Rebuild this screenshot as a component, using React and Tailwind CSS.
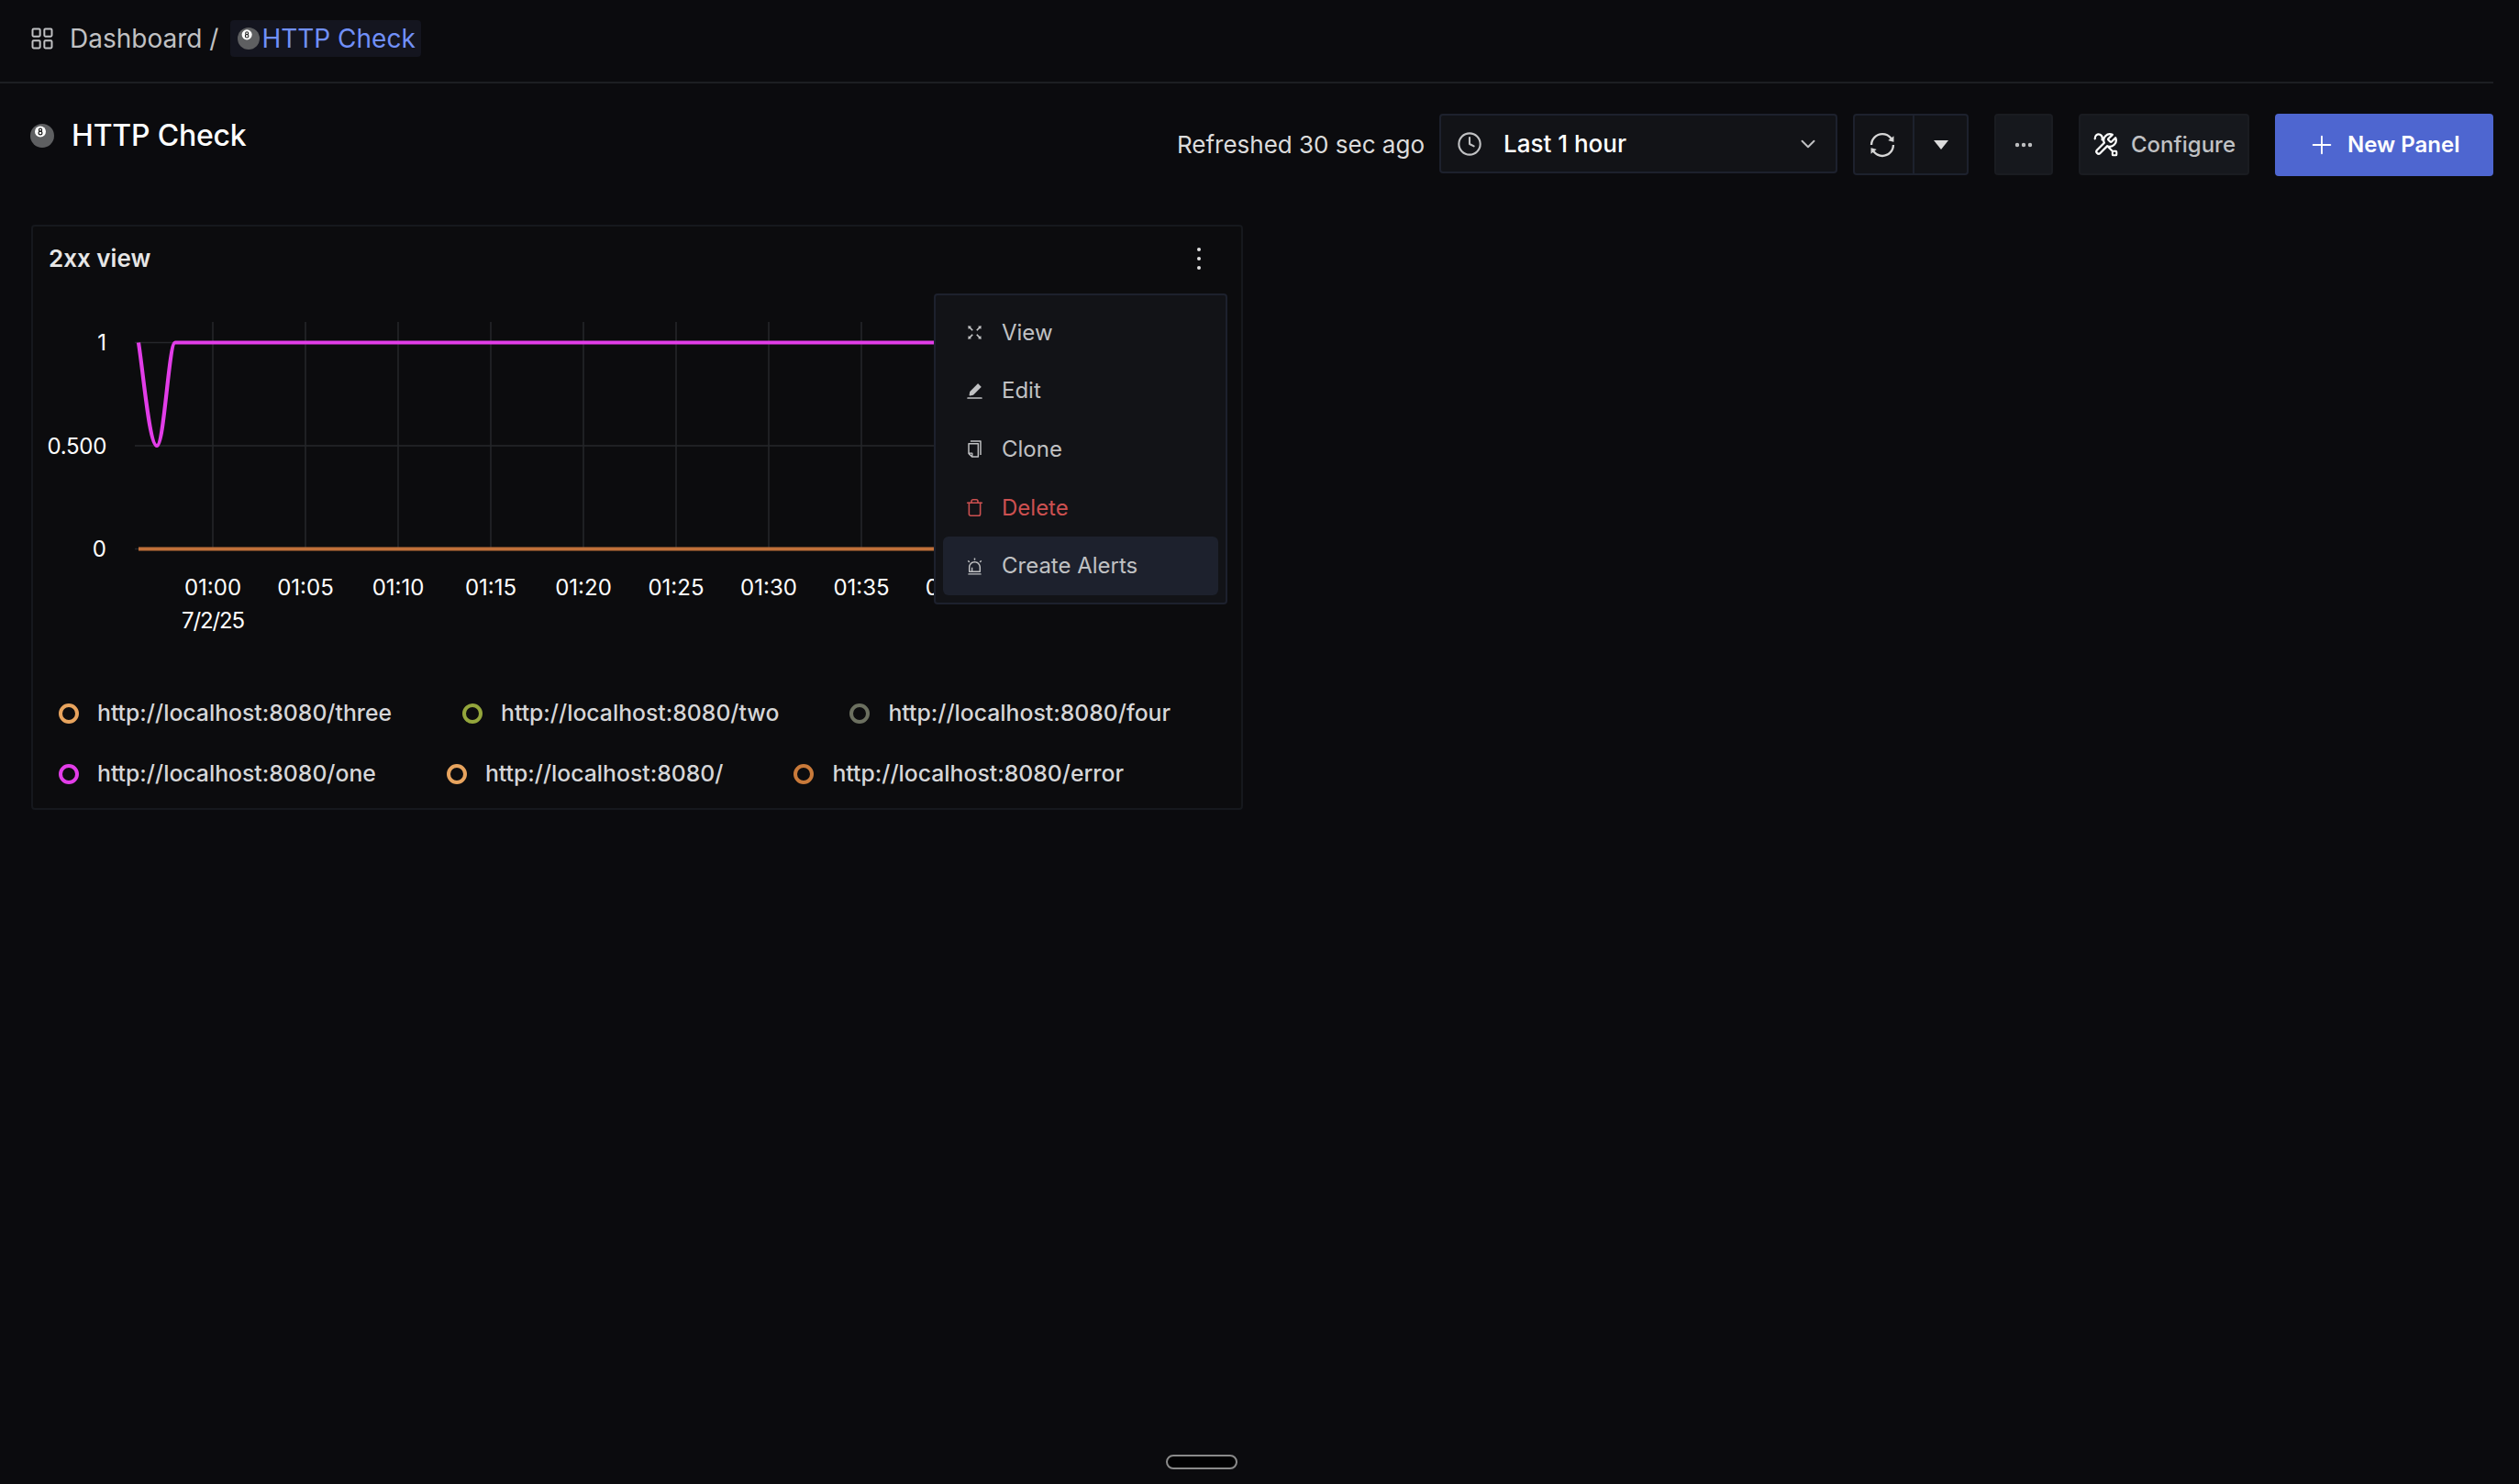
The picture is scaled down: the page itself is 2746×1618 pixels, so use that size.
import React from 'react';
import { ChevronDown, Clock, Ellipsis, LayoutGrid, Plus, Trash } from 'lucide-react';
import { AiFillEdit, AiOutlineAlert, AiOutlineCopy, AiOutlineFullscreen, AiOutlineSync } from 'react-icons/ai';

const EightBall = ({ className }) => (
  <svg className={className} viewBox="0 0 26 26">
    <circle cx="13" cy="13" r="13" fill="#5e5f61" />
    <path d="M.6 9a13 13 0 0 0 25 8A12.500 12.500 0 0 1 .6 9Z" fill="#47484a" />
    <circle cx="11" cy="8.500" r="6" fill="#fff" />
    <circle cx="11" cy="6.800" r="1.600" fill="none" stroke="#222" strokeWidth="1.200" />
    <circle cx="11" cy="10" r="1.900" fill="none" stroke="#222" strokeWidth="1.200" />
  </svg>
);

const ConfigureIcon = () => (
  <svg className="w-[27px] h-[27px]" viewBox="0 0 24 24" fill="none" stroke="#fff" strokeWidth="2" strokeLinecap="round" strokeLinejoin="round">
    <path d="M14.700 6.300a1 1 0 0 0 0 1.400l1.600 1.600a1 1 0 0 0 1.400 0l3.770-3.770a6 6 0 0 1-7.940 7.940l-6.910 6.910a2.120 2.120 0 0 1-3-3l6.910-6.910a6 6 0 0 1 7.940-7.940l-3.760 3.760z" />
    <path d="M1.500 6.500C1.500 3 4 1.500 6.500 2.500C8.500 3.500 9 5.500 8.500 7.500" />
    <path d="M14.500 14.500L18 18" />
    <rect x="18.500" y="18.500" width="4" height="4" rx=".8" strokeWidth="1.800" />
  </svg>
);

const menuItems = [
  { label: 'View', Icon: AiOutlineFullscreen },
  { label: 'Edit', Icon: AiFillEdit },
  { label: 'Clone', Icon: AiOutlineCopy },
  { label: 'Delete', Icon: Trash, danger: true },
  { label: 'Create Alerts', Icon: AiOutlineAlert, active: true },
];

const legendRows = [
  [
    { label: 'http://localhost:8080/three', border: 'border-[#e8a45e]' },
    { label: 'http://localhost:8080/two', border: 'border-[#94a63c]' },
    { label: 'http://localhost:8080/four', border: 'border-[#6c7060]' },
  ],
  [
    { label: 'http://localhost:8080/one', border: 'border-[#e23de8]' },
    { label: 'http://localhost:8080/', border: 'border-[#e8a45e]' },
    { label: 'http://localhost:8080/error', border: 'border-[#c97a3a]' },
  ],
];

const ticks = [
  ['01:00', 232], ['01:05', 333], ['01:10', 434], ['01:15', 535], ['01:20', 636],
  ['01:25', 737], ['01:30', 838], ['01:35', 939], ['01:40', 1040],
];

// viewBox uses page coordinates, the svg sits at x=36, y=316
const Chart = () => (
  <svg className="block w-[1317px] h-[390px]" viewBox="36 316 1317 390" fontFamily="Inter, sans-serif" fontSize="24" fill="#fff">
    {[372.5, 485, 597.5].map((y) => (
      <line key={y} x1="147" x2="1330" y1={y} y2={y} stroke="#26272b" strokeWidth="1.500" />
    ))}
    {ticks.map(([label, x]) => (
      <g key={label}>
        <line x1={x} x2={x} y1="350" y2="598" stroke="#26272b" strokeWidth="1.500" />
        <text x={x} y="648" textAnchor="middle">{label}</text>
      </g>
    ))}
    <text x="232" y="684" textAnchor="middle" letterSpacing="-1.1">7/2/25</text>
    <text x="116" y="381" textAnchor="end">1</text>
    <text x="116" y="494" textAnchor="end" letterSpacing="-0.3">0.500</text>
    <text x="116" y="606" textAnchor="end">0</text>
    <path d="M151 372.500C157 412 163 485 171 485C179 485 184 372.500 191 372.500H1330" fill="none" stroke="#e23de8" strokeWidth="4.200" />
    <path d="M151 597.500H1330" fill="none" stroke="#c0703a" strokeWidth="4.200" />
  </svg>
);

const PanelMenu = () => (
  <div className="absolute left-[982px] top-[73px] w-[320px] h-[339px] flex flex-col rounded bg-[#121317] border-2 border-[#1d212d] p-2 pt-[9px]">
    {menuItems.map(({ label, Icon, danger, active }) => (
      <div
        key={label}
        className={`flex items-center h-16 pl-[24px] gap-[19px] rounded-md text-[24px] ${danger ? 'text-[#cc5050]' : 'text-[#c0c1c3]'} ${active ? 'bg-[#1d212d]' : ''}`}
      >
        <Icon className="w-[21px] h-[21px] shrink-0" strokeWidth={label === 'Delete' ? 1.800 : undefined} />
        <span>{label}</span>
      </div>
    ))}
  </div>
);

const App = () => {
  return (
    <div className="relative min-h-[1618px] bg-[#0b0b0e] text-white [font-family:Inter,sans-serif]">
      <div className="flex items-center h-[91px] mr-[28px] pl-[32px] pb-[6px] border-b-2 border-[#1d1e22]">
        <LayoutGrid className="w-[28px] h-[28px] text-[#c0c1c3]" strokeWidth={1.700} />
        <span className="ml-[16px] text-[28px] text-[#c0c1c3]">Dashboard /</span>
        <div className="ml-[13px] flex items-center h-10 pl-2 pr-[6px] rounded bg-[#14151f] text-[28px] text-[#7190f9]">
          <EightBall className="w-6 h-6" />
          <span className="ml-[2px]">HTTP Check</span>
        </div>
      </div>

      <div className="flex items-start justify-between pt-[33px] pl-[33px] pr-[28px]">
        <div className="flex items-center mt-[5px]">
          <EightBall className="w-[26px] h-[26px]" />
          <span className="ml-[19px] text-[32px] font-medium leading-[38px] tracking-[-0.2px]">HTTP Check</span>
        </div>
        <div className="flex items-start">
          <span className="h-[66px] flex items-center text-[26px] text-[#dcdcdc]">Refreshed 30 sec ago</span>
          <div className="ml-4 w-[434px] h-[65px] flex items-center pl-[17px] pr-[17px] rounded bg-[#121317] border-2 border-[#1d212d]">
            <Clock className="w-[28px] h-[28px] text-[#c0c1c3]" strokeWidth={1.800} />
            <span className="ml-[23px] text-[26px] font-medium">Last 1 hour</span>
            <ChevronDown className="ml-auto w-[26px] h-[26px] text-[#c0c1c3]" strokeWidth={1.800} />
          </div>
          <div className="ml-[17px] w-[126px] h-[67px] flex rounded bg-[#121317] border-2 border-[#1d212d]">
            <div className="w-[65px] flex items-center justify-center pr-[3px] border-r-2 border-[#1d212d]">
              <AiOutlineSync className="w-[32px] h-[32px] text-[#d6d6d6]" />
            </div>
            <div className="flex-1 flex items-center justify-center">
              <div className="w-0 h-0 border-x-[8px] border-x-transparent border-t-[10px] border-t-[#dcdcdc]" />
            </div>
          </div>
          <div className="ml-[28px] w-16 h-[67px] flex items-center justify-center rounded bg-[#16181d] border-2 border-[#1a1c21]">
            <Ellipsis className="w-6 h-6 text-[#c0c1c3]" strokeWidth={2.400} />
          </div>
          <div className="ml-[28px] w-[186px] h-[67px] flex items-center pl-[14px] rounded bg-[#16181d] border-2 border-[#1a1c21]">
            <ConfigureIcon />
            <span className="ml-[14px] text-[24px] font-medium text-[#c0c1c3]">Configure</span>
          </div>
          <div className="ml-[28px] w-[238px] h-[68px] flex items-center pl-[35px] rounded bg-[#4e66d0]">
            <Plus className="w-8 h-8" strokeWidth={1.400} />
            <span className="ml-[12px] text-[24px] font-semibold">New Panel</span>
          </div>
        </div>
      </div>

      <div className="relative mt-[53px] ml-[34px] w-[1321px] h-[638px] rounded bg-[#0c0c0e] border-2 border-[#16181d]">
        <div className="flex items-center justify-between h-[69px] pl-[17px] pr-[44px]">
          <span className="text-[26px] font-semibold text-[#e6e6e6]">2xx view</span>
          <div className="flex flex-col gap-[6px]">
            <span className="w-1 h-1 rounded-full bg-[#e0e0e0]" />
            <span className="w-1 h-1 rounded-full bg-[#e0e0e0]" />
            <span className="w-1 h-1 rounded-full bg-[#e0e0e0]" />
          </div>
        </div>
        <div className="pt-px">
          <Chart />
        </div>
        <div className="flex flex-col gap-[40px] mt-[58px] pl-[28px]">
          {legendRows.map((row, i) => (
            <div key={i} className="flex gap-[77px]">
              {row.map(({ label, border }) => (
                <div key={label} className="flex items-center gap-[20px] h-[26px]">
                  <span className={`w-[22px] h-[22px] rounded-full border-[4px] ${border}`} />
                  <span className="text-[24.75px] font-medium text-[#d6d6d8]">{label}</span>
                </div>
              ))}
            </div>
          ))}
        </div>
        <PanelMenu />
      </div>

      <div className="absolute left-[1271px] top-[1586px] w-[78px] h-4 rounded-full bg-[#020203] border-2 border-[#8a8a8a]" />
    </div>
  );
};

export default App;
